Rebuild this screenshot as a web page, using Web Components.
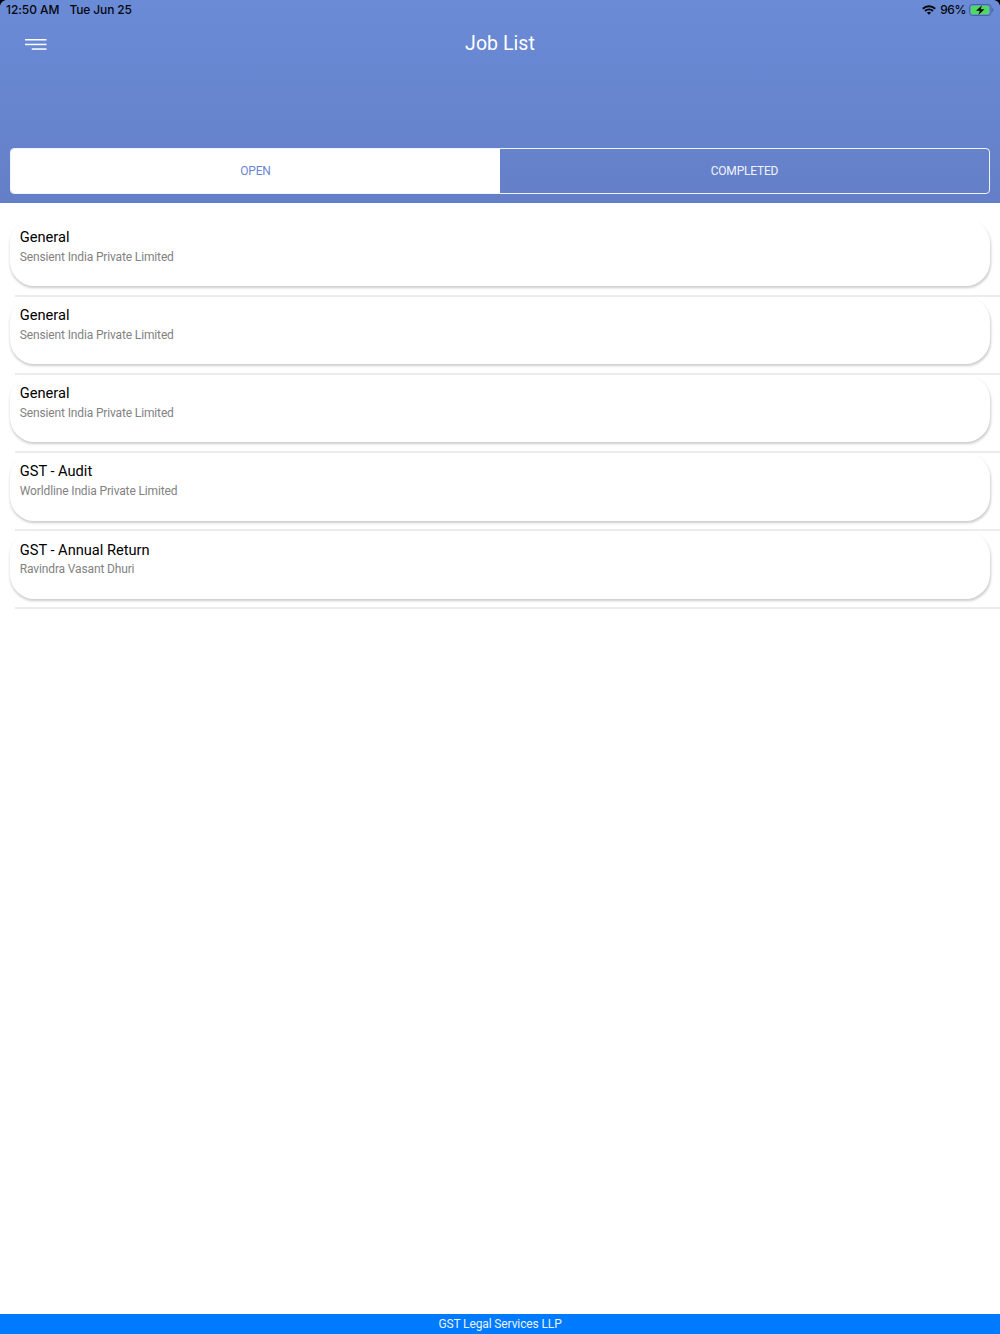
<!DOCTYPE html>
<html lang="en">
<head>
<meta charset="utf-8">
<title>Job List</title>
<style>
  body {
    margin: 0;
    background: #fff;
    font-family: Roboto, "Liberation Sans", sans-serif;
  }
</style>
</head>
<body>
<job-app>
  <app-header slot="header" heading="Job List">
    <status-bar slot="status" time="12:50 AM" date="Tue Jun 25" battery="96%"></status-bar>
    <segment-tabs>
      <segment-tab active>OPEN</segment-tab>
      <segment-tab>COMPLETED</segment-tab>
    </segment-tabs>
  </app-header>
  <job-card heading="General">Sensient India Private Limited</job-card>
  <job-card heading="General">Sensient India Private Limited</job-card>
  <job-card heading="General">Sensient India Private Limited</job-card>
  <job-card heading="GST - Audit">Worldline India Private Limited</job-card>
  <job-card heading="GST - Annual Return">Ravindra Vasant Dhuri</job-card>
  <app-footer slot="footer">GST Legal Services LLP</app-footer>
</job-app>

<script>
class JobApp extends HTMLElement {
  constructor() {
    super();
    this.attachShadow({ mode: 'open' }).innerHTML = `
      <style>
        :host {
          display: flex;
          flex-direction: column;
          height: 1334px;
          overflow: hidden;
        }
        main {
          flex: 1;
          padding-top: 15.3px;
        }
      </style>
      <slot name="header"></slot>
      <main><slot></slot></main>
      <slot name="footer"></slot>
    `;
  }
}

class StatusBar extends HTMLElement {
  constructor() {
    super();
    this.attachShadow({ mode: 'open' }).innerHTML = `
      <style>
        :host {
          display: flex;
          align-items: center;
          height: 20px;
          padding: 0 6px;
          font: 500 12px/20px Inter, sans-serif;
          color: #05070c;
        }
        .time { width: 63.5px; letter-spacing: -0.05px; }
        .date { flex: 1; letter-spacing: -0.15px; }
        .battery { margin: 0 3px 0 4.5px; letter-spacing: -0.4px; }
        span { white-space: nowrap; }
        svg { display: block; }
      </style>
      <span class="time">${this.getAttribute('time')}</span>
      <span class="date">${this.getAttribute('date')}</span>
      <svg width="14" height="10" viewBox="0 0 14 10">
        <g fill="none" stroke="#05070c" stroke-width="1.9">
          <path d="M.8 3.7a8.9 8.9 0 0 1 12.4 0"/>
          <path d="M3 6a5.8 5.8 0 0 1 8 0"/>
        </g>
        <path d="M7 9.8 4.9 7.7a3 3 0 0 1 4.2 0z" fill="#05070c"/>
      </svg>
      <span class="battery">${this.getAttribute('battery')}</span>
      <svg width="25" height="12" viewBox="0 0 25 12">
        <rect x=".5" y=".5" width="21.6" height="11" rx="3.2" fill="none" stroke="#4a60a0"/>
        <rect x="1.8" y="1.8" width="18.2" height="8.4" rx="1.8" fill="#4cd964"/>
        <path d="M23.2 4v4c1.7-.6 1.7-3.4 0-4z" fill="#4a60a0"/>
        <path d="M13 1.2 7 6.8h3.8L9.4 11l6.1-5.8h-3.8z" fill="#05070c"/>
      </svg>
    `;
  }
}

class AppHeader extends HTMLElement {
  constructor() {
    super();
    this.attachShadow({ mode: 'open' }).innerHTML = `
      <style>
        :host {
          display: flex;
          flex-direction: column;
          position: relative;
          box-sizing: border-box;
          height: 203.3px;
          padding-bottom: 9.6px;
          background: linear-gradient(#6a8bd6, #647fc8);
        }
        .corner {
          position: absolute;
          top: 0;
          width: 7px;
          height: 7px;
        }
        .left { left: 0; background: radial-gradient(circle at 100% 100%, transparent 6.6px, #000 7.4px); }
        .right { right: 0; background: radial-gradient(circle at 0 100%, transparent 6.6px, #000 7.4px); }
        .bar {
          display: grid;
          grid-template-columns: 1fr auto 1fr;
          align-items: center;
          height: 47px;
          padding: 0 24.5px;
          color: #fff;
        }
        h1 {
          margin: 0;
          font-size: 19.5px;
          font-weight: 400;
          line-height: 24px;
          letter-spacing: 0.05px;
        }
        svg {
          display: block;
          margin-top: 1px;
        }
        .tabs { margin-top: auto; }
      </style>
      <div class="corner left"></div>
      <div class="corner right"></div>
      <slot name="status"></slot>
      <div class="bar">
        <svg width="22" height="13" viewBox="0 0 22 13" fill="#fff">
          <rect y="1" width="21.5" height="1.5"/>
          <rect y="5.7" width="21.5" height="1.5"/>
          <rect x="6.7" y="10.3" width="14.8" height="1.5"/>
        </svg>
        <h1>${this.getAttribute('heading')}</h1>
      </div>
      <div class="tabs"><slot></slot></div>
    `;
  }
}

class SegmentTabs extends HTMLElement {
  constructor() {
    super();
    this.attachShadow({ mode: 'open' }).innerHTML = `
      <style>
        :host {
          display: flex;
          box-sizing: border-box;
          height: 46px;
          margin: 0 10px;
          border: 1px solid #f0f3fb;
          border-radius: 4px;
          overflow: hidden;
        }
      </style>
      <slot></slot>
    `;
  }
}

class SegmentTab extends HTMLElement {
  constructor() {
    super();
    this.attachShadow({ mode: 'open' }).innerHTML = `
      <style>
        :host {
          display: flex;
          flex: 1;
          align-items: center;
          justify-content: center;
          font-size: 12px;
          letter-spacing: -0.2px;
          color: #f0f3fb;
        }
        :host([active]) {
          background: #fff;
          color: #6a87d3;
        }
      </style>
      <slot></slot>
    `;
  }
}

class JobCard extends HTMLElement {
  constructor() {
    super();
    this.attachShadow({ mode: 'open' }).innerHTML = `
      <style>
        :host {
          display: block;
          height: 78.1px;
        }
        .card {
          box-sizing: border-box;
          height: 67.7px;
          margin: 0 10px;
          padding: 9.6px 9.8px 0;
          border-radius: 24.4px;
          background: #fff;
          box-shadow: 0.5px 2px 2.5px rgba(0, 0, 0, 0.2);
        }
        h2 {
          margin: 0;
          font-size: 14.65px;
          font-weight: 400;
          line-height: 19px;
          letter-spacing: -0.02px;
          color: #000;
        }
        p {
          margin: -0.2px 0 0;
          font-size: 12px;
          line-height: 20px;
          letter-spacing: -0.14px;
          color: #828282;
        }
        hr {
          height: 2px;
          margin: 8.8px 0 0 14.6px;
          border: 0;
          background: #ececec;
        }
      </style>
      <div class="card">
        <h2>${this.getAttribute('heading')}</h2>
        <p><slot></slot></p>
      </div>
      <hr>
    `;
  }
}

class AppFooter extends HTMLElement {
  constructor() {
    super();
    this.attachShadow({ mode: 'open' }).innerHTML = `
      <style>
        :host {
          display: block;
          height: 19.7px;
          background: #007aff;
          color: #e9f3ff;
          font-size: 12px;
          line-height: 21px;
          letter-spacing: -0.12px;
          text-align: center;
        }
      </style>
      <slot></slot>
    `;
  }
}

customElements.define('job-app', JobApp);
customElements.define('status-bar', StatusBar);
customElements.define('app-header', AppHeader);
customElements.define('segment-tabs', SegmentTabs);
customElements.define('segment-tab', SegmentTab);
customElements.define('job-card', JobCard);
customElements.define('app-footer', AppFooter);
</script>
</body>
</html>
